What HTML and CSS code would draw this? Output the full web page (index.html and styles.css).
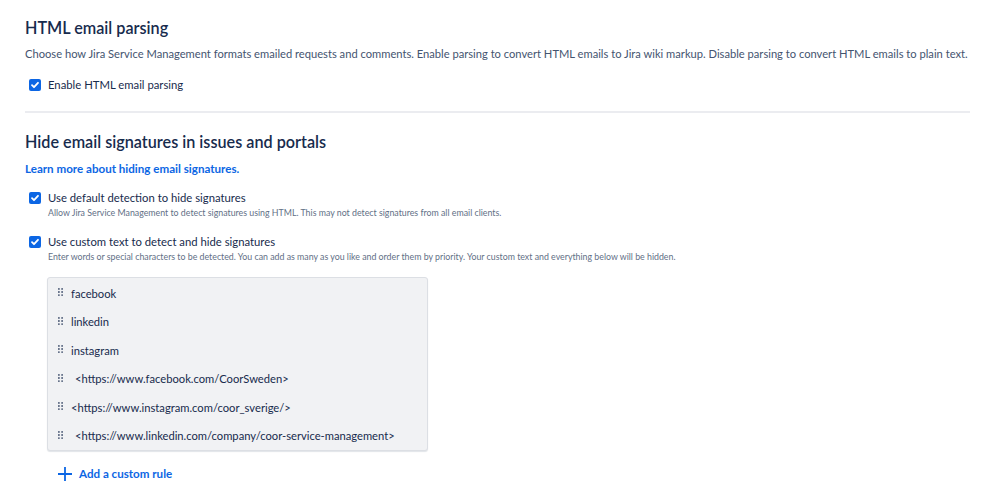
FILE: index.html
```html
<!DOCTYPE html>
<html lang="en">
<head>
    <meta charset="UTF-8">
    <title>Email settings</title>
    <link rel="stylesheet" href="styles.css">
</head>
<body>
<div class="settings">
    <section class="block">
        <h2 class="block-title">HTML email parsing</h2>
        <p class="block-desc">Choose how Jira Service Management formats emailed requests and comments. Enable parsing to convert HTML emails to Jira wiki markup. Disable parsing to convert HTML emails to plain text.</p>
        <label class="check">
            <span class="box"><svg width="12" height="12" viewBox="0 0 12 12"><path d="M3 6.2l2 2 4-4.4" fill="none" stroke="#fff" stroke-width="1.8" stroke-linecap="round" stroke-linejoin="round"/></svg></span>
            <span class="check-label">Enable HTML email parsing</span>
        </label>
    </section>

    <hr class="divider">

    <section class="block">
        <h2 class="block-title">Hide email signatures in issues and portals</h2>
        <a class="learn" href="#">Learn more about hiding email signatures.</a>

        <label class="check check-first">
            <span class="box"><svg width="12" height="12" viewBox="0 0 12 12"><path d="M3 6.2l2 2 4-4.4" fill="none" stroke="#fff" stroke-width="1.8" stroke-linecap="round" stroke-linejoin="round"/></svg></span>
            <span>
                <span class="check-label">Use default detection to hide signatures</span>
                <span class="check-help">Allow Jira Service Management to detect signatures using HTML. This may not detect signatures from all email clients.</span>
            </span>
        </label>

        <label class="check check-second">
            <span class="box"><svg width="12" height="12" viewBox="0 0 12 12"><path d="M3 6.2l2 2 4-4.4" fill="none" stroke="#fff" stroke-width="1.8" stroke-linecap="round" stroke-linejoin="round"/></svg></span>
            <span>
                <span class="check-label">Use custom text to detect and hide signatures</span>
                <span class="check-help">Enter words or special characters to be detected. You can add as many as you like and order them by priority. Your custom text and everything below will be hidden.</span>
            </span>
        </label>

        <ul class="rules">
            <li><svg class="grip" width="5" height="8" viewBox="0 0 5 8"><g fill="#42526e"><circle cx="0.9" cy="0.9" r="0.9"/><circle cx="4.1" cy="0.9" r="0.9"/><circle cx="0.9" cy="4" r="0.9"/><circle cx="4.1" cy="4" r="0.9"/><circle cx="0.9" cy="7.1" r="0.9"/><circle cx="4.1" cy="7.1" r="0.9"/></g></svg><span>facebook</span></li>
            <li><svg class="grip" width="5" height="8" viewBox="0 0 5 8"><g fill="#42526e"><circle cx="0.9" cy="0.9" r="0.9"/><circle cx="4.1" cy="0.9" r="0.9"/><circle cx="0.9" cy="4" r="0.9"/><circle cx="4.1" cy="4" r="0.9"/><circle cx="0.9" cy="7.1" r="0.9"/><circle cx="4.1" cy="7.1" r="0.9"/></g></svg><span>linkedin</span></li>
            <li><svg class="grip" width="5" height="8" viewBox="0 0 5 8"><g fill="#42526e"><circle cx="0.9" cy="0.9" r="0.9"/><circle cx="4.1" cy="0.9" r="0.9"/><circle cx="0.9" cy="4" r="0.9"/><circle cx="4.1" cy="4" r="0.9"/><circle cx="0.9" cy="7.1" r="0.9"/><circle cx="4.1" cy="7.1" r="0.9"/></g></svg><span>instagram</span></li>
            <li><svg class="grip" width="5" height="8" viewBox="0 0 5 8"><g fill="#42526e"><circle cx="0.9" cy="0.9" r="0.9"/><circle cx="4.1" cy="0.9" r="0.9"/><circle cx="0.9" cy="4" r="0.9"/><circle cx="4.1" cy="4" r="0.9"/><circle cx="0.9" cy="7.1" r="0.9"/><circle cx="4.1" cy="7.1" r="0.9"/></g></svg><span class="pad">&lt;https://www.facebook.com/CoorSweden&gt;</span></li>
            <li><svg class="grip" width="5" height="8" viewBox="0 0 5 8"><g fill="#42526e"><circle cx="0.9" cy="0.9" r="0.9"/><circle cx="4.1" cy="0.9" r="0.9"/><circle cx="0.9" cy="4" r="0.9"/><circle cx="4.1" cy="4" r="0.9"/><circle cx="0.9" cy="7.1" r="0.9"/><circle cx="4.1" cy="7.1" r="0.9"/></g></svg><span>&lt;https://www.instagram.com/coor_sverige/&gt;</span></li>
            <li><svg class="grip" width="5" height="8" viewBox="0 0 5 8"><g fill="#42526e"><circle cx="0.9" cy="0.9" r="0.9"/><circle cx="4.1" cy="0.9" r="0.9"/><circle cx="0.9" cy="4" r="0.9"/><circle cx="4.1" cy="4" r="0.9"/><circle cx="0.9" cy="7.1" r="0.9"/><circle cx="4.1" cy="7.1" r="0.9"/></g></svg><span class="pad">&lt;https://www.linkedin.com/company/coor-service-management&gt;</span></li>
        </ul>

        <a class="add-rule" href="#">
            <svg width="16" height="16" viewBox="0 0 16 16"><path d="M8 1v14M1 8h14" stroke="#0c66e4" stroke-width="1.8"/></svg>
            Add a custom rule
        </a>
    </section>
</div>
</body>
</html>
```

FILE: styles.css
```css
body {
    margin: 0;
    background: #fff;
    font-family: "Lato", "Noto Sans", sans-serif;
    color: #172b4d;
}

.settings {
    padding: 17px 29px 0 25px;
}

.block-title {
    margin: 0;
    font-size: 16.2px;
    font-weight: 600;
    line-height: 22px;
    color: #172b4d;
}

.block-desc {
    margin: 6px 0 0 0;
    font-size: 11.17px;
    line-height: 18px;
    color: #44546f;
}

.check {
    display: flex;
    align-items: flex-start;
    gap: 7px;
    margin-top: 13px;
    margin-left: 4px;
    font-size: 11.3px;
    line-height: 18px;
}

.box {
    flex: none;
    width: 12px;
    height: 12px;
    margin-top: 3px;
    border-radius: 2px;
    background: #0c66e4;
    display: flex;
}

.check-label {
    display: block;
    color: #172b4d;
}

.check-help {
    display: block;
    font-size: 8.8px;
    line-height: 12px;
    color: #626f86;
}

.divider {
    border: none;
    height: 2px;
    background: #ebecf0;
    margin: 17px 0 0 0;
}

.divider + .block .block-title {
    margin-top: 18px;
}

.learn {
    display: block;
    margin-top: 7px;
    font-size: 11.6px;
    line-height: 18px;
    font-weight: 700;
    color: #0c66e4;
    text-decoration: none;
}

.check-first {
    margin-top: 11px;
}

.check-second {
    margin-top: 14px;
}

.rules {
    list-style: none;
    margin: 14px 0 0 22px;
    padding: 0;
    width: 379px;
    background: #f1f2f4;
    border: 1px solid #dcdfe4;
    border-radius: 3px;
    box-shadow: 0 1px 1px rgba(9, 30, 66, 0.12);
}

.rules li {
    display: flex;
    align-items: center;
    gap: 8px;
    height: 28.5px;
    padding-left: 10px;
    font-size: 11.2px;
    color: #172b4d;
}

.rules li:first-child {
    padding-top: 1px;
}

.grip {
    flex: none;
    margin-top: -2px;
}

.pad {
    padding-left: 4px;
}

.add-rule {
    display: inline-flex;
    align-items: center;
    gap: 6px;
    margin: 14px 0 0 32px;
    font-size: 11.6px;
    line-height: 18px;
    font-weight: 700;
    color: #0c66e4;
    text-decoration: none;
}
```
